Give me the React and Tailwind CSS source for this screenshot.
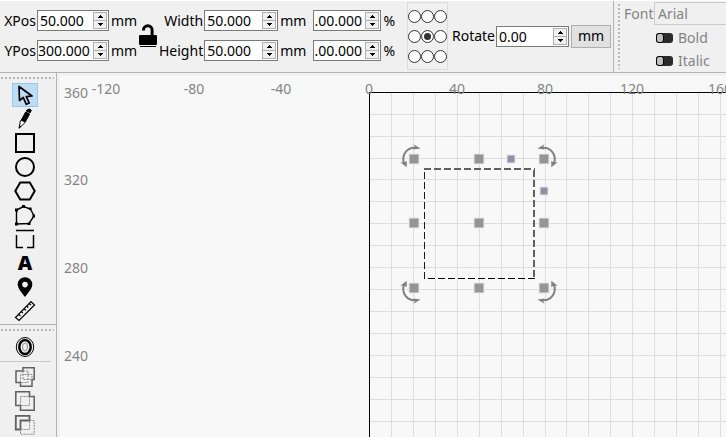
import React from 'react';
import { clsx } from 'clsx';

const COLS = [22, 44, 66, 88, 110, 132, 154, 176, 197, 219, 241, 263, 285, 307, 329, 351];
const ROWS = [22, 44, 66, 87, 109, 131, 153, 175, 197, 219, 241, 263, 285, 307, 329, 351];

const X_LABELS = [
  { text: '-120', x: 46 },
  { text: '-80', x: 134 },
  { text: '-40', x: 221 },
  { text: '0', x: 309 },
  { text: '40', x: 397 },
  { text: '80', x: 485 },
  { text: '120', x: 572 },
  { text: '160', x: 660 },
];

const Y_LABELS = [
  { text: '360', y: 22 },
  { text: '320', y: 109 },
  { text: '280', y: 197 },
  { text: '240', y: 285 },
];

const HANDLES = [
  [354, 83], [419, 83], [484, 83],
  [354, 147], [419, 147], [484, 147],
  [354, 212], [419, 212], [484, 212],
];

const DRAW_TOOLS = [
  { name: 'Select', Icon: IconSelect },
  { name: 'Draw lines', Icon: IconPencil },
  { name: 'Rectangle', Icon: IconSquare },
  { name: 'Ellipse', Icon: IconCircle },
  { name: 'Polygon', Icon: IconHexagon },
  { name: 'Edit nodes', Icon: IconNodes },
  { name: 'Edit tabs', Icon: IconTabs },
  { name: 'Edit text', Icon: IconText },
  { name: 'Position laser', Icon: IconPin },
  { name: 'Measure', Icon: IconRuler },
];

const BOOLEAN_TOOLS = [
  { name: 'Weld', Icon: IconWeld },
  { name: 'Boolean union', Icon: IconUnion },
  { name: 'Boolean subtract', Icon: IconSubtract },
];

export default function App() {
  return (
    <div className="flex h-screen flex-col overflow-hidden bg-[#f0f0f0] font-['Noto_Sans',sans-serif] text-[14px] leading-5 text-black">
      <TopBar />
      <div className="flex min-h-0 flex-1">
        <ToolBox />
        <main className="min-w-0 flex-1 pt-[3px] pl-[3px]">
          <Canvas />
        </main>
      </div>
    </div>
  );
}

function TopBar() {
  return (
    <header className="flex h-[73px] shrink-0 overflow-hidden border-t border-b border-t-white border-b-[#b4b4b4]">
      <div className="flex shrink-0 border-r border-[#b4b4b4] pr-[2px] pl-1">
        <div className="flex flex-col gap-[9px] pt-[9px]">
          <Field id="xpos" label="XPos" value="50.000" unit="mm" labelClass="w-8" boxClass="w-[72px]" padClass="pl-[2px]" />
          <Field id="ypos" label="YPos" value="300.000" unit="mm" labelClass="w-8" boxClass="w-[72px]" padClass="pl-0" />
        </div>
        <button type="button" aria-label="Lock aspect ratio" className="mt-[23px] ml-[2px] h-6 w-[18px]">
          <IconUnlock />
        </button>
        <div className="ml-1 flex flex-col gap-[9px] pt-[9px]">
          <Field id="width" label="Width" value="50.000" unit="mm" labelClass="w-[42px]" boxClass="w-[74px]" padClass="pl-[2px]" />
          <Field id="height" label="Height" value="50.000" unit="mm" labelClass="w-[42px]" boxClass="w-[74px]" padClass="pl-[2px]" />
        </div>
        <div className="ml-[7px] flex flex-col gap-[9px] pt-[9px]">
          <Field id="width-scale" name="Width percent" value=".00.000" unit="%" boxClass="w-[68px]" padClass="pl-0" />
          <Field id="height-scale" name="Height percent" value=".00.000" unit="%" boxClass="w-[68px]" padClass="pl-0" />
        </div>
        <AnchorGrid />
        <div className="flex items-center pb-px pl-1">
          <Field id="rotate" label="Rotate" value="0.00" labelClass="w-[43px]" boxClass="w-[73px]" padClass="pl-[2px]" />
          <button type="button" className="ml-[2px] flex h-[23px] w-10 items-center justify-center border border-[#adadad] bg-[#e1e1e1]">
            mm
          </button>
        </div>
      </div>
      <FontPanel />
    </header>
  );
}

function Field({ id, label, name, value, unit, labelClass, boxClass, padClass }) {
  return (
    <div className="flex h-[21px] items-center">
      {label && (
        <label htmlFor={id} className={clsx('mr-px flex shrink-0 justify-end whitespace-nowrap', labelClass)}>
          {label}
        </label>
      )}
      <div className={clsx('flex h-[21px] shrink-0 border border-[#7a7a7a] bg-white', boxClass)}>
        <input
          id={id}
          type="text"
          aria-label={name}
          defaultValue={value}
          className={clsx('h-full w-0 min-w-0 flex-1 bg-transparent outline-none', padClass)}
        />
        <div className="my-px mr-px flex w-[14px] shrink-0 flex-col">
          <StepButton label={`Increase ${label || name}`} up />
          <StepButton label={`Decrease ${label || name}`} />
        </div>
      </div>
      {unit && <span className="ml-[2px]">{unit}</span>}
    </div>
  );
}

function StepButton({ label, up }) {
  return (
    <button
      type="button"
      aria-label={label}
      className={clsx(
        'flex w-full flex-1 items-center justify-center border border-[#b0b0b0] bg-[#f0f0f0]',
        !up && 'border-t-0'
      )}
    >
      <svg width="5" height="3" viewBox="0 0 5 3" shapeRendering="crispEdges">
        <path d={up ? 'M2 0h1v1h1v1h1v1H0V2h1V1h1z' : 'M0 0h5v1H4v1H3v1H2V2H1V1H0z'} />
      </svg>
    </button>
  );
}

function AnchorGrid() {
  return (
    <fieldset className="mt-px ml-3 flex h-[68px] w-[41px] shrink-0 flex-col justify-center gap-[7px] border border-[#dcdcdc]" aria-label="Anchor point">
      {[0, 1, 2].map((row) => (
        <div key={row} className="flex">
          {[0, 1, 2].map((col) => (
            <input
              key={col}
              type="radio"
              name="anchor"
              aria-label={`Anchor row ${row + 1} column ${col + 1}`}
              defaultChecked={row === 1 && col === 1}
              className="grid h-[13px] w-[13px] shrink-0 appearance-none place-items-center rounded-full border border-[#333] bg-white before:h-[7px] before:w-[7px] before:rounded-full checked:before:bg-[#333]"
            />
          ))}
        </div>
      ))}
    </fieldset>
  );
}

function FontPanel() {
  return (
    <div className="flex min-w-0 flex-1 pl-1 text-[#838383]">
      <div className="mt-[3px] h-[65px] w-[2px] shrink-0 bg-[repeating-linear-gradient(180deg,#b8b8b8_0_2px,transparent_2px_4px)]" />
      <div className="min-w-0 flex-1 pl-1">
        <div className="mt-px flex items-center">
          <label htmlFor="font" className="w-[30px] shrink-0">Font</label>
          <select id="font" className="h-[23px] min-w-32 flex-1 appearance-none border border-[#cccccc] bg-[#f0f0f0] pl-[3px]">
            <option>Arial</option>
          </select>
        </div>
        <div className="mt-[3px] flex flex-col gap-[3px] pl-8">
          <Toggle label="Bold" />
          <Toggle label="Italic" />
        </div>
      </div>
    </div>
  );
}

function Toggle({ label }) {
  return (
    <label className="flex h-5 items-center gap-[5px]">
      <input
        type="checkbox"
        className="h-[10px] w-[17px] appearance-none rounded-[3px] bg-[#2b2b2b] before:block before:h-[10px] before:w-[8px] before:rounded-[3px] before:border before:border-black before:bg-[#c0c0c0]"
      />
      {label}
    </label>
  );
}

function ToolBox() {
  return (
    <aside className="flex w-[57px] shrink-0 flex-col overflow-hidden border-r border-[#b4b4b4]">
      <Grip />
      <div className="mt-1 flex flex-col pl-3">
        {DRAW_TOOLS.map(({ name, Icon }, i) => (
          <ToolButton key={name} name={name} active={i === 0}>
            <Icon />
          </ToolButton>
        ))}
      </div>
      <div className="mt-px border-t border-[#b4b4b4]" />
      <Grip />
      <div className="mt-1 pl-3">
        <ToolButton name="Offset shapes">
          <IconOffset />
        </ToolButton>
      </div>
      <div className="mt-[2px] mr-[5px] border-t border-[#c8c8c8]" />
      <div className="mt-[3px] flex flex-col pl-3">
        {BOOLEAN_TOOLS.map(({ name, Icon }) => (
          <ToolButton key={name} name={name}>
            <Icon />
          </ToolButton>
        ))}
      </div>
    </aside>
  );
}

function Grip() {
  return (
    <div className="mt-1 mr-[2px] ml-px h-[2px] shrink-0 bg-[repeating-linear-gradient(90deg,#b8b8b8_0_2px,transparent_2px_4px)]" />
  );
}

function ToolButton({ name, active, children }) {
  return (
    <button
      type="button"
      aria-label={name}
      className={clsx(
        'flex h-6 w-[26px] shrink-0 items-center justify-center border',
        active ? 'border-[#90c8f6] bg-[#c0dcf3]' : 'border-transparent'
      )}
    >
      {children}
    </button>
  );
}

// Workspace: one grid cell is 10 mm
function Canvas() {
  return (
    <svg className="block h-full w-full bg-[#f8f8f8]" role="img" aria-label="Workspace">
      <g stroke="#dedede" shapeRendering="crispEdges">
        {COLS.map((x) => (
          <line key={x} x1={309.5 + x} x2={309.5 + x} y1="16" y2="100%" />
        ))}
        {ROWS.map((y) => (
          <line key={y} x1="309" x2="100%" y1={16.5 + y} y2={16.5 + y} />
        ))}
      </g>
      <g stroke="#000" shapeRendering="crispEdges">
        <line x1="309" x2="100%" y1="16.5" y2="16.5" />
        <line x1="309.5" x2="309.5" y1="16" y2="100%" />
      </g>
      <g fill="#858585" fontSize="14">
        {X_LABELS.map((l) => (
          <text key={l.text} x={l.x} y="18" textAnchor="middle">{l.text}</text>
        ))}
        {Y_LABELS.map((l) => (
          <text key={l.text} x="4" y={l.y}>{l.text}</text>
        ))}
      </g>

      {/* selected rectangle */}
      <g fill="none" strokeDasharray="7 3">
        <path d="M364 93H475" stroke="#606060" strokeWidth="2" />
        <path d="M474 94V203" stroke="#606060" strokeWidth="2" />
        <path d="M364.5 203V93" stroke="#1a1a1a" strokeWidth="1" />
        <path d="M475 202.5H364" stroke="#000" strokeWidth="1" />
      </g>

      <g fill="#959595" stroke="#e8e8e8">
        {HANDLES.map(([x, y]) => (
          <rect key={`${x}-${y}`} x={x - 5} y={y - 5} width="10" height="10" />
        ))}
      </g>
      <g fill="#9090a0" stroke="#e4e4ea">
        <rect x="447" y="79" width="8" height="8" />
        <rect x="480" y="111" width="8" height="8" />
      </g>

      <RotateArrow transform="translate(354 83)" />
      <RotateArrow transform="translate(484 83) scale(-1 1)" />
      <RotateArrow transform="translate(354 213) scale(1 -1)" />
      <RotateArrow transform="translate(484 213) scale(-1 -1)" />
    </svg>
  );
}

function RotateArrow({ transform }) {
  return (
    <g transform={transform}>
      <path d="M-10.2 4C-12.5-4.500-7-11.500 1-11.200" fill="none" stroke="#808080" strokeWidth="2" />
      <path d="M-.5-14.700 6.500-10.500-.5-9.500 1-12zM-13.700 3.200-7.300 8.200-7.200 2-10.500 3.500z" fill="#808080" />
    </g>
  );
}

function IconUnlock() {
  return (
    <svg width="18" height="24" viewBox="0 0 18 24">
      <path d="M4.500 6.500V6a4.300 4.300 0 0 1 8.600 0V12" fill="none" stroke="#000" strokeWidth="3" />
      <rect x="0" y="11" width="18" height="10" rx="1" />
      <path d="M1 22.500h16" stroke="#000" />
    </svg>
  );
}

function IconSelect() {
  return (
    <svg width="22" height="22" viewBox="0 0 22 22" fill="none" stroke="#000" strokeWidth="1.700" strokeLinejoin="round">
      <path d="M5 2.500 5.500 16.500 9.300 13.500 12.300 20.300 15.200 19 12.300 12.600 18 12z" />
    </svg>
  );
}

function IconPencil() {
  return (
    <svg width="22" height="22" viewBox="0 0 22 22">
      <path d="M13.300 1.800Q15.500 0 17.300 2.300L16.200 4.700 12.200 2.900zM11.700 4 15.600 6 11 14.500 7 12.500z" stroke="#000" strokeWidth="1" />
      <path d="M6.500 12.500 5 20.300 11 14.600" fill="#fff" stroke="#000" strokeLinejoin="round" />
      <path d="m5.800 17.500 1.700 1L5 20.300z" />
    </svg>
  );
}

function IconSquare() {
  return (
    <svg width="22" height="22" viewBox="0 0 22 22" fill="none" stroke="#000" strokeWidth="2">
      <path d="M2 2h18v18H2z" />
    </svg>
  );
}

function IconCircle() {
  return (
    <svg width="22" height="22" viewBox="0 0 22 22" fill="none" stroke="#000" strokeWidth="2">
      <circle cx="11" cy="11" r="9" />
    </svg>
  );
}

function IconHexagon() {
  return (
    <svg width="22" height="22" viewBox="0 0 22 22" fill="none" stroke="#000" strokeWidth="2">
      <path d="M6.200 2.500h9.600L20.700 11l-4.900 8.500H6.200L1.300 11z" />
    </svg>
  );
}

function IconNodes() {
  return (
    <svg width="22" height="22" viewBox="0 0 22 22">
      <path d="M2.500 20V6l7-3.500 7 2.500L20 12l-5 7.500z" fill="none" stroke="#000" strokeWidth="1.400" />
      <path d="M1 18.500h3v3H1zM1 4.500h3v3H1zM8 1h3v3H8zM15 3.500h2.500V6H15zM18.500 10.500H21v3h-2.500zM13.500 18.500h3v2.500h-3z" />
    </svg>
  );
}

function IconTabs() {
  return (
    <svg width="22" height="22" viewBox="0 0 22 22" fill="none" stroke="#000" strokeWidth="1.500">
      <path d="M2 2.500h18M2.500 7v12.500H9M19.500 7v12.500H13" />
    </svg>
  );
}

function IconText() {
  return <span className="font-['Open_Sans',sans-serif] text-[20px] leading-none font-extrabold">A</span>;
}

function IconPin() {
  return (
    <svg width="22" height="22" viewBox="0 0 22 22">
      <path fillRule="evenodd" d="M11 1.200A7.300 7.300 0 0 1 18.300 8.500C18.300 12.500 14 17 11 21 8 17 3.700 12.500 3.700 8.500A7.300 7.300 0 0 1 11 1.200zm0 4.600a2.800 2.800 0 1 0 0 5.600 2.800 2.800 0 0 0 0-5.600z" />
    </svg>
  );
}

function IconRuler() {
  return (
    <svg width="22" height="22" viewBox="0 0 22 22" fill="none" stroke="#000" strokeWidth="1.200">
      <path d="m1.500 17.500 15.500-16 3.500 3.500L5 20.500z" />
      <path d="m4.500 14.500 2 1.500M7.300 11.500l1.500 1.500M10 8.800l2 1.500M12.800 6l1.500 1.500M15 3.500l2 1.500" />
    </svg>
  );
}

function IconOffset() {
  return (
    <svg width="22" height="22" viewBox="0 0 22 22" fill="none" stroke="#000">
      <ellipse cx="11" cy="11" rx="8.700" ry="9.500" strokeWidth="1" />
      <ellipse cx="11" cy="11" rx="5.700" ry="7" strokeWidth="2.500" />
      <ellipse cx="11" cy="11" rx="2.500" ry="4" strokeWidth=".8" stroke="#777" />
    </svg>
  );
}

function IconWeld() {
  return (
    <svg width="22" height="22" viewBox="0 0 22 22" fill="none" stroke="#606060" strokeWidth="1.500">
      <path d="M9 5V1.800H20.200V13.500H18V20.200H6.500V16.500H2V5z" />
      <path d="M9 5V13.500H18M6.500 16.500V8.500H18v5M9 5h5v11.500H6.500" stroke="#888" strokeWidth="1" strokeDasharray="2 1" />
    </svg>
  );
}

function IconUnion() {
  return (
    <svg width="22" height="22" viewBox="0 0 22 22" fill="none" stroke="#606060" strokeWidth="1.500">
      <path d="M1.800 1.800H15.500V6.500H20.200V20.200H6.500V15.500H1.800z" />
      <path d="M6.500 15.500v-9h9M15.500 6.500v9h-9" stroke="#888" strokeWidth="1" strokeDasharray="2 1" />
    </svg>
  );
}

function IconSubtract() {
  return (
    <svg width="22" height="22" viewBox="0 0 22 22" fill="none" stroke="#606060" strokeWidth="1.800">
      <path d="M1.800 1.800H15.500V6.500H6.500V15.500H1.800z" />
      <path d="M15.500 6.500h4.700v13.700H6.500V15.500M6.500 15.500h9v-9" stroke="#888" strokeWidth="1" strokeDasharray="2 1" />
    </svg>
  );
}
